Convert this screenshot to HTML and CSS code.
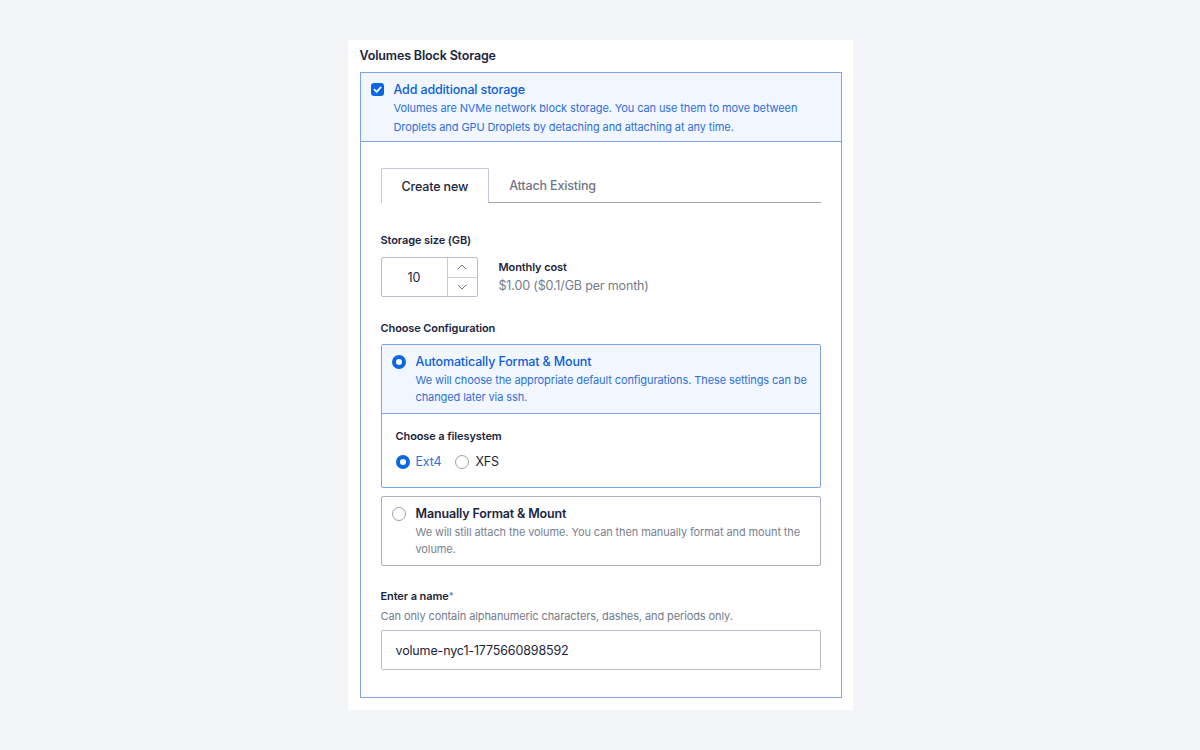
FILE: index.html
```html
<!DOCTYPE html>
<html lang="en">
<head>
    <meta charset="UTF-8">
    <meta name="viewport" content="width=device-width, initial-scale=1.0">
    <title>Volumes Block Storage</title>
    <link rel="stylesheet" href="styles.css">
</head>
<body>
    <div class="panel">
        <p class="panel-title">Volumes Block Storage</p>
        <div class="storage-box">
            <div class="storage-head">
                <span class="checkbox">
                    <svg width="9" height="9" viewBox="0 0 10 10"><path d="M1.5 5.2 4 7.6 8.6 2.6" fill="none" stroke="#fff" stroke-width="1.8" stroke-linecap="round" stroke-linejoin="round"/></svg>
                </span>
                <div>
                    <p class="head-title">Add additional storage</p>
                    <p class="head-desc">Volumes are NVMe network block storage. You can use them to move between Droplets and GPU Droplets by detaching and attaching at any time.</p>
                </div>
            </div>

            <div class="storage-body">
                <div class="tabs">
                    <span class="tab active">Create new</span>
                    <span class="tab">Attach Existing</span>
                </div>

                <p class="label size-label">Storage size (GB)</p>
                <div class="size-row">
                    <div class="stepper">
                        <span class="stepper-value">10</span>
                        <div class="stepper-btns">
                            <span class="stepper-btn">
                                <svg width="10" height="6" viewBox="0 0 10 6"><path d="M1 5 5 1 9 5" fill="none" stroke="#6b7384" stroke-width="1"/></svg>
                            </span>
                            <span class="stepper-btn">
                                <svg width="10" height="6" viewBox="0 0 10 6"><path d="M1 1 5 5 9 1" fill="none" stroke="#6b7384" stroke-width="1"/></svg>
                            </span>
                        </div>
                    </div>
                    <div class="cost">
                        <p class="label">Monthly cost</p>
                        <p class="cost-value">$1.00 ($0.1/GB per month)</p>
                    </div>
                </div>

                <p class="label config-label">Choose Configuration</p>
                <div class="card selected">
                    <div class="card-head">
                        <span class="radio on"></span>
                        <div>
                            <p class="card-title">Automatically Format &amp; Mount</p>
                            <p class="card-desc">We will choose the appropriate default configurations. These settings can be changed later via ssh.</p>
                        </div>
                    </div>
                    <div class="card-extra">
                        <p class="label">Choose a filesystem</p>
                        <div class="fs-row">
                            <span class="fs-option current"><span class="radio on"></span>Ext4</span>
                            <span class="fs-option"><span class="radio"></span>XFS</span>
                        </div>
                    </div>
                </div>
                <div class="card">
                    <div class="card-head">
                        <span class="radio"></span>
                        <div>
                            <p class="card-title">Manually Format &amp; Mount</p>
                            <p class="card-desc">We will still attach the volume. You can then manually format and mount the volume.</p>
                        </div>
                    </div>
                </div>

                <p class="label name-label">Enter a name<span class="req">*</span></p>
                <p class="hint">Can only contain alphanumeric characters, dashes, and periods only.</p>
                <div class="name-input">volume-nyc1-1775660898592</div>
            </div>
        </div>
    </div>
</body>
</html>
```

FILE: styles.css
```css
body {
    margin: 0;
    background-color: #f3f5f8;
    font-family: Inter, "Liberation Sans", sans-serif;
    color: #031b4e;
}
p {
    margin: 0;
}
.panel {
    width: 482px;
    margin: 40px auto 0;
    padding: 7px 11px 12px 12px;
    background-color: #fff;
}
.panel-title {
    font-size: 12.5px;
    letter-spacing: -0.15px;
    font-weight: 600;
    line-height: 18px;
    margin-bottom: 7px;
    color: #1b2540;
}
.storage-box {
    border: 1px solid #7ea3ea;
}
.storage-head {
    display: flex;
    gap: 10px;
    padding: 7px 10px 4px;
    background-color: #f2f7ff;
    border-bottom: 1px solid #7ea3ea;
}
.checkbox {
    flex: none;
    width: 13px;
    height: 13px;
    margin-top: 3px;
    border-radius: 3px;
    background-color: #0b66e4;
    display: flex;
    align-items: center;
    justify-content: center;
}
.head-title {
    font-size: 12.5px;
    letter-spacing: -0.15px;
    font-weight: 500;
    line-height: 19px;
    color: #0b5fd9;
}
.head-desc {
    font-size: 11px;
    letter-spacing: -0.1px;
    line-height: 19px;
    color: #2f6fd8;
}
.storage-body {
    padding: 26px 20px 27px;
}
.tabs {
    display: flex;
    border-bottom: 1px solid #9aa1b5;
    height: 34px;
}
.tab {
    display: flex;
    align-items: center;
    padding: 0 21px 0 20px;
    font-size: 12.5px;
    letter-spacing: -0.15px;
    font-weight: 500;
    color: #6f7689;
}
.tab.active {
    color: #1b2540;
    background-color: #fff;
    border: 1px solid #c3c8d4;
    border-bottom: 0;
    margin-bottom: -1px;
    border-radius: 2px 2px 0 0;
    padding-right: 20px;
}
.label {
    font-size: 11px;
    letter-spacing: -0.1px;
    font-weight: 600;
    line-height: 16px;
    color: #1b2540;
}
.size-label {
    margin-top: 29px;
}
.size-row {
    display: flex;
    gap: 21px;
    margin-top: 9px;
}
.stepper {
    display: flex;
    width: 95px;
    height: 38px;
    border: 1px solid #b9bec9;
    border-radius: 2px;
}
.stepper-value {
    width: 65px;
    display: flex;
    align-items: center;
    justify-content: center;
    font-size: 12.5px;
    color: #1b2540;
    border-right: 1px solid #c8ccd6;
}
.stepper-btns {
    flex: 1;
    display: flex;
    flex-direction: column;
}
.stepper-btn {
    flex: 1;
    display: flex;
    align-items: center;
    justify-content: center;
}
.stepper-btn + .stepper-btn {
    border-top: 1px solid #c8ccd6;
}
.cost {
    padding-top: 2px;
}
.cost-value {
    margin-top: 2px;
    font-size: 12.5px;
    letter-spacing: -0.15px;
    line-height: 18px;
    color: #737b8c;
}
.config-label {
    margin-top: 23px;
}
.card {
    margin-top: 8px;
    border: 1px solid #a9afbc;
    border-radius: 2px;
}
.card.selected {
    border-color: #7ea3ea;
}
.card-head {
    display: flex;
    gap: 10px;
    padding: 8px 10px 7px 10px;
}
.card.selected .card-head {
    background-color: #f2f7ff;
    border-bottom: 1px solid #7ea3ea;
}
.card-title {
    font-size: 12.5px;
    letter-spacing: -0.15px;
    font-weight: 600;
    line-height: 18px;
    color: #1b2540;
}
.card.selected .card-title {
    color: #0b5fd9;
    font-weight: 500;
}
.card-desc {
    margin-top: 1px;
    font-size: 11px;
    letter-spacing: -0.1px;
    line-height: 17px;
    color: #7a8192;
}
.card.selected .card-desc {
    color: #2f6fd8;
}
.radio {
    flex: none;
    box-sizing: border-box;
    width: 14px;
    height: 14px;
    margin-top: 2px;
    border-radius: 50%;
    border: 1px solid #9aa0ad;
    background-color: #fff;
}
.radio.on {
    border: 4px solid #0b66e4;
}
.card-extra {
    padding: 14px 14px 16px;
}
.fs-row {
    display: flex;
    gap: 14px;
    margin-top: 9px;
}
.fs-option {
    display: flex;
    align-items: center;
    gap: 6px;
    font-size: 12.5px;
    letter-spacing: -0.15px;
    line-height: 18px;
    color: #1b2540;
}
.fs-option .radio {
    margin-top: 0;
}
.fs-option.current {
    color: #2f6fd8;
}
.name-label {
    margin-top: 22px;
}
.req {
    color: #4a86e8;
    font-size: 9px;
    vertical-align: top;
}
.hint {
    margin-top: 4px;
    font-size: 11px;
    letter-spacing: -0.1px;
    line-height: 16px;
    color: #737b8c;
}
.name-input {
    margin-top: 6px;
    height: 38px;
    border: 1px solid #b9bec9;
    border-radius: 2px;
    padding: 0 14px;
    display: flex;
    align-items: center;
    font-size: 12.5px;
    letter-spacing: -0.15px;
    color: #1b2540;
}
```
